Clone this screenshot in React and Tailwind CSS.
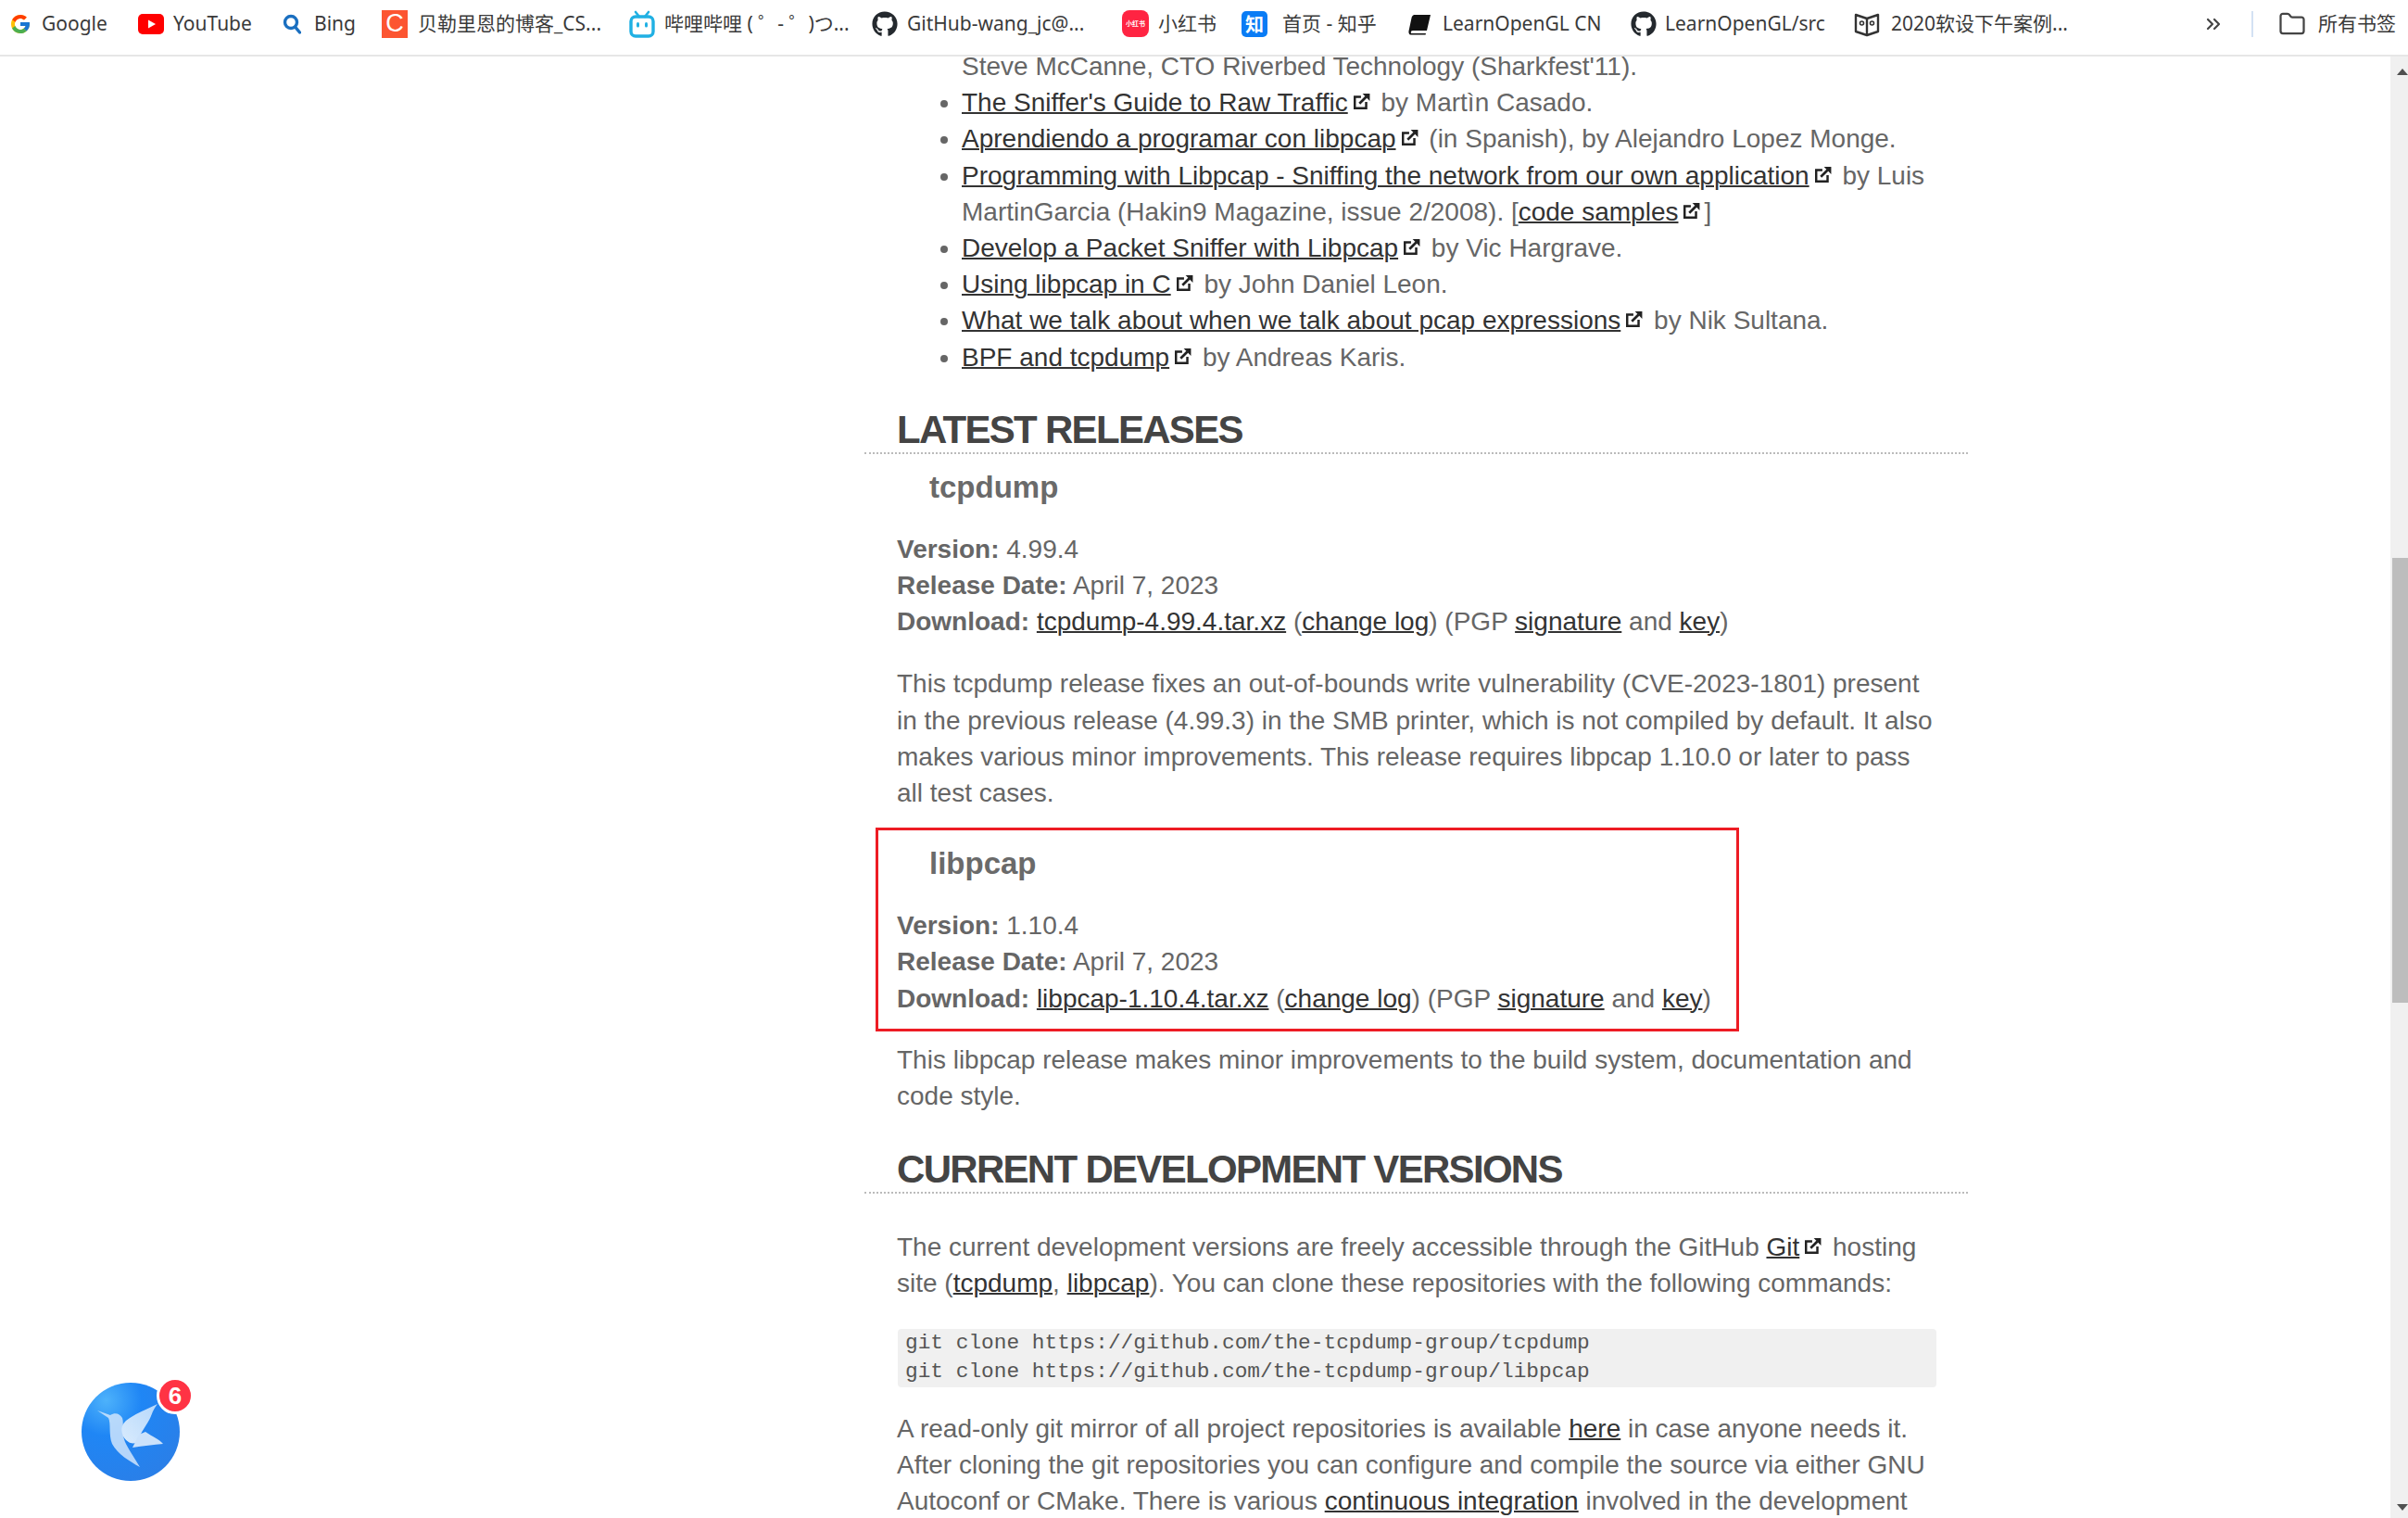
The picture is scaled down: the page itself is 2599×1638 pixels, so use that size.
import { ChevronsRight, Folder } from 'lucide-react';
import { FcGoogle } from 'react-icons/fc';
import { FaGithub } from 'react-icons/fa';

const YouTube = () => (
  <svg viewBox="0 0 28 22" className="w-[28px] h-[22px]">
    <rect width="28" height="22" rx="5" fill="#f00" />
    <path d="M11 6.5 L19 11 L11 15.5 Z" fill="#fff" />
  </svg>
);

const Bing = () => (
  <svg viewBox="0 0 20 24" className="w-[20px] h-[24px]" fill="none" stroke="#1a6fc0" strokeWidth="3.4">
    <circle cx="9" cy="10" r="6.5" />
    <path d="M13.5 15 L18.5 21" strokeLinecap="round" />
  </svg>
);

const Csdn = () => (
  <div className="w-[28px] h-[30px] bg-[#fc5531] flex items-center justify-center text-white text-[27px] font-['Liberation_Sans']">C</div>
);

const Bili = () => (
  <svg viewBox="0 0 28 30" className="w-[28px] h-[30px]" fill="none">
    <path d="M7 2 L11 7 M21 2 L17 7" stroke="#20b0e3" strokeWidth="2.6" strokeLinecap="round" />
    <rect x="2" y="7" width="24" height="21" rx="5" stroke="#20b0e3" strokeWidth="3.4" />
    <rect x="8" y="13" width="3" height="5.5" rx="1.5" fill="#20b0e3" />
    <rect x="17" y="13" width="3" height="5.5" rx="1.5" fill="#20b0e3" />
  </svg>
);

const Github = () => <FaGithub className="w-[28px] h-[28px] text-[#24292e]" />;

const RedBook = () => (
  <div className="w-[29px] h-[29px] rounded-[8px] bg-[#ff2442] flex items-center justify-center text-white text-[7px] font-bold font-['Noto_Sans_CJK_SC']">小红书</div>
);

const Zhihu = () => (
  <div className="w-[28px] h-[28px] rounded-[5px] bg-[#0a7cf5] flex items-center justify-center text-white text-[20px] font-bold font-['Noto_Sans_CJK_SC']">知</div>
);

const BlackBook = () => (
  <svg viewBox="0 0 26 26" className="w-[26px] h-[26px]">
    <path d="M7 3 H24 L20 20 H5 C3 20 2.4 21.6 3 23 H19 L18.6 24.6 H3 C1 24.6 0 22.6 0.6 20 L3.6 6 C4 4 5.4 3 7 3 Z" fill="#111" />
  </svg>
);

const OpenBook = () => (
  <svg viewBox="0 0 28 28" className="w-[28px] h-[28px]" fill="none" stroke="#333" strokeWidth="2.4">
    <path d="M2 4 L14 8 L26 4 V22 L14 26 L2 22 Z" strokeLinejoin="round" />
    <path d="M14 8 V26" />
    <circle cx="8.5" cy="13" r="2" strokeWidth="1.6" />
    <circle cx="19.5" cy="13" r="2" strokeWidth="1.6" />
  </svg>
);

const bookmarks = [
  { icon: <FcGoogle className="w-[24px] h-[24px]" />, label: 'Google', left: 10, gap: 11, width: 74 },
  { icon: <YouTube />, label: 'YouTube', left: 30, gap: 10, width: 86 },
  { icon: <Bing />, label: 'Bing', left: 32, gap: 14, width: 45 },
  { icon: <Csdn />, label: '贝勒里恩的博客_CS...', left: 28, gap: 11, width: 204 },
  { icon: <Bili />, label: '哔哩哔哩 ( ゜- ゜)つ...', left: 24, gap: 10, width: 200 },
  { icon: <Github />, label: 'GitHub-wang_jc@...', left: 24, gap: 10, width: 204 },
  { icon: <RedBook />, label: '小红书', left: 28, gap: 10, width: 64 },
  { icon: <Zhihu />, label: '首页 - 知乎', left: 26, gap: 16, width: 106 },
  { icon: <BlackBook />, label: 'LearnOpenGL CN', left: 30, gap: 11, width: 176 },
  { icon: <Github />, label: 'LearnOpenGL/src', left: 27, gap: 9, width: 178 },
  { icon: <OpenBook />, label: '2020软设下午案例...', left: 26, gap: 12, width: 194 },
];

function BookmarksBar() {
  return (
    <div className="h-[61px] shrink-0 bg-white border-b-2 border-[#e6e6e6] flex items-center pb-[8px] text-[21px] text-[#3a3a3a] font-['Noto_Sans','Noto_Sans_CJK_SC',sans-serif] whitespace-nowrap">
      {bookmarks.map((b) => (
        <div key={b.label} className="flex items-center shrink-0" style={{ marginLeft: b.left }}>
          {b.icon}
          <span style={{ marginLeft: b.gap, width: b.width }}>{b.label}</span>
        </div>
      ))}
      <ChevronsRight className="w-[24px] h-[24px] ml-[142px] text-[#444] shrink-0" strokeWidth={2.2} />
      <div className="w-[2px] h-[28px] bg-[#d3e1f3] ml-[29px] shrink-0" />
      <Folder className="w-[30px] h-[30px] ml-[27px] text-[#444] shrink-0" strokeWidth={1.8} />
      <span className="ml-[13px]">所有书签</span>
    </div>
  );
}

const ExtIcon = () => (
  <svg viewBox="0 0 17 17" className="inline-block w-[19px] h-[19px] ml-[5px] mr-[4px] align-[1px]" fill="none">
    <path d="M8 4 H2 V15 H13 V9" stroke="#222" strokeWidth="2.2" />
    <path d="M6.5 10.5 L13 4" stroke="#222" strokeWidth="2.4" />
    <path d="M9.5 1 H16.5 V8 Z" fill="#222" />
  </svg>
);

const A = ({ children }) => <a className="underline decoration-2 text-[#333]">{children}</a>;

const Ext = ({ children }) => (
  <>
    <A>{children}</A>
    <ExtIcon />
  </>
);

const H2 = ({ children, className }) => (
  <h2 className={`text-[42px] leading-[48px] font-bold text-[#444] tracking-[-1.7px] pl-[35px] border-b-2 border-dotted border-[#bbb] ${className}`}>
    {children}
  </h2>
);

const H3 = ({ children, className }) => (
  <h3 className={`text-[33px] leading-[40px] font-bold text-[#6a6a6a] pl-[70px] ${className}`}>{children}</h3>
);

const P = ({ children, className = '' }) => <p className={`pl-[35px] pr-[30px] ${className}`}>{children}</p>;

function Article() {
  return (
    <div className="ml-[933px] w-[1191px] -mt-[9px] text-[28px] leading-[39.2px] text-[#666] font-['Liberation_Sans',sans-serif]">
      <ul className="list-disc pl-[105px] pr-[30px] marker:text-[#666]">
        <li className="list-none">Steve McCanne, CTO Riverbed Technology (Sharkfest'11).</li>
        <li><Ext>The Sniffer's Guide to Raw Traffic</Ext> by Martìn Casado.</li>
        <li><Ext>Aprendiendo a programar con libpcap</Ext> (in Spanish), by Alejandro Lopez Monge.</li>
        <li>
          <Ext>Programming with Libpcap - Sniffing the network from our own application</Ext> by Luis MartinGarcia (Hakin9 Magazine, issue 2/2008). [<A>code samples</A><ExtIcon />]
        </li>
        <li><Ext>Develop a Packet Sniffer with Libpcap</Ext> by Vic Hargrave.</li>
        <li><Ext>Using libpcap in C</Ext> by John Daniel Leon.</li>
        <li><Ext>What we talk about when we talk about pcap expressions</Ext> by Nik Sultana.</li>
        <li><Ext>BPF and tcpdump</Ext> by Andreas Karis.</li>
      </ul>

      <H2 className="mt-[35px]">LATEST RELEASES</H2>
      <H3 className="mt-[16px]">tcpdump</H3>
      <P className="mt-[27px]">
        <b>Version:</b> 4.99.4<br />
        <b>Release Date:</b> April 7, 2023<br />
        <b>Download:</b> <A>tcpdump-4.99.4.tar.xz</A> (<A>change log</A>) (PGP <A>signature</A> and <A>key</A>)
      </P>
      <P className="mt-[28px]">
        This tcpdump release fixes an out-of-bounds write vulnerability (CVE-2023-1801) present in the previous release (4.99.3) in the SMB printer, which is not compiled by default. It also makes various minor improvements. This release requires libpcap 1.10.0 or later to pass all test cases.
      </P>

      <div className="relative">
        <div className="absolute left-[12px] top-[18px] w-[932px] h-[220px] border-[3px] border-[#ed1c24]" />
        <H3 className="pt-[37px]">libpcap</H3>
        <P className="mt-[27px]">
          <b>Version:</b> 1.10.4<br />
          <b>Release Date:</b> April 7, 2023<br />
          <b>Download:</b> <A>libpcap-1.10.4.tar.xz</A> (<A>change log</A>) (PGP <A>signature</A> and <A>key</A>)
        </P>
      </div>
      <P className="mt-[27px]">
        This libpcap release makes minor improvements to the build system, documentation and code style.
      </P>

      <H2 className="mt-[36px]">CURRENT DEVELOPMENT VERSIONS</H2>
      <P className="mt-[38px]">
        The current development versions are freely accessible through the GitHub <A>Git</A><ExtIcon /> hosting site (<A>tcpdump</A>, <A>libpcap</A>). You can clone these repositories with the following commands:
      </P>
      <pre className="ml-[36px] mr-[34px] mt-[29px] px-[8px] py-[0px] bg-[#f0f0f0] rounded-[4px] text-[22.8px] leading-[31.5px] text-[#555] font-['Liberation_Mono',monospace]">
        git clone https://github.com/the-tcpdump-group/tcpdump{'\n'}git clone https://github.com/the-tcpdump-group/libpcap
      </pre>
      <P className="mt-[25px]">
        A read-only git mirror of all project repositories is available <A>here</A> in case anyone needs it. After cloning the git repositories you can configure and compile the source via either GNU Autoconf or CMake. There is various <A>continuous integration</A> involved in the development
      </P>
    </div>
  );
}

function Scrollbar() {
  return (
    <div className="w-[19px] shrink-0 bg-[#f0f0f0] flex flex-col items-end pt-[13px] pb-[8px]">
      <div className="w-0 h-0 mr-[0px] border-x-[6px] border-x-transparent border-b-[7px] border-b-[#505050]" />
      <div className="w-[17px] h-[480px] bg-[#bdbdbd] mt-[521px]" />
      <div className="flex-1" />
      <div className="w-0 h-0 border-x-[6px] border-x-transparent border-t-[7px] border-t-[#505050]" />
    </div>
  );
}

function FloatingBird() {
  return (
    <div className="absolute left-[88px] top-[1492px] w-[106px] h-[106px]">
      <svg viewBox="0 0 106 106" className="w-full h-full">
        <defs>
          <radialGradient id="birdBg" cx="25%" cy="18%" r="90%">
            <stop offset="0" stopColor="#4db2fb" />
            <stop offset="0.4" stopColor="#1f86f5" />
            <stop offset="1" stopColor="#2a7fe8" />
          </radialGradient>
          <linearGradient id="wing" x1="0" y1="1" x2="1" y2="0">
            <stop offset="0" stopColor="#d9ebfd" />
            <stop offset="1" stopColor="#b6d8fb" />
          </linearGradient>
        </defs>
        <circle cx="53" cy="53" r="53" fill="url(#birdBg)" />
        <path d="M17 30 L31 35 C36 32 41 33 44 38 C46 44 43 52 46 61 C48 68 54 76 63 91 C52 85 39 77 33 66 C29 56 32 44 29 38 Z" fill="#cfe4fb" fillOpacity="0.85" />
        <path d="M48 41 C58 33 72 28 82 23 C76 30 76 36 72 42 C67 50 63 56 61 62 C58 68 50 66 45 58 C42 50 43 46 48 41 Z" fill="url(#wing)" />
        <path d="M62 56 L69 53 C76 58 84 61 88 66 C78 67 66 68 55 70 Z" fill="#cbe2fb" />
      </svg>
      <div className="absolute -right-[15px] -top-[6px] w-[40px] h-[40px] rounded-full bg-[#ff3344] border-[3px] border-white flex items-center justify-center text-white text-[26px] font-bold font-['Liberation_Sans',sans-serif]">
        6
      </div>
    </div>
  );
}

export default function App() {
  return (
    <div className="relative h-screen flex flex-col overflow-hidden bg-white">
      <BookmarksBar />
      <div className="flex-1 flex min-h-0">
        <div className="flex-1 overflow-hidden">
          <Article />
        </div>
        <Scrollbar />
      </div>
      <FloatingBird />
    </div>
  );
}
